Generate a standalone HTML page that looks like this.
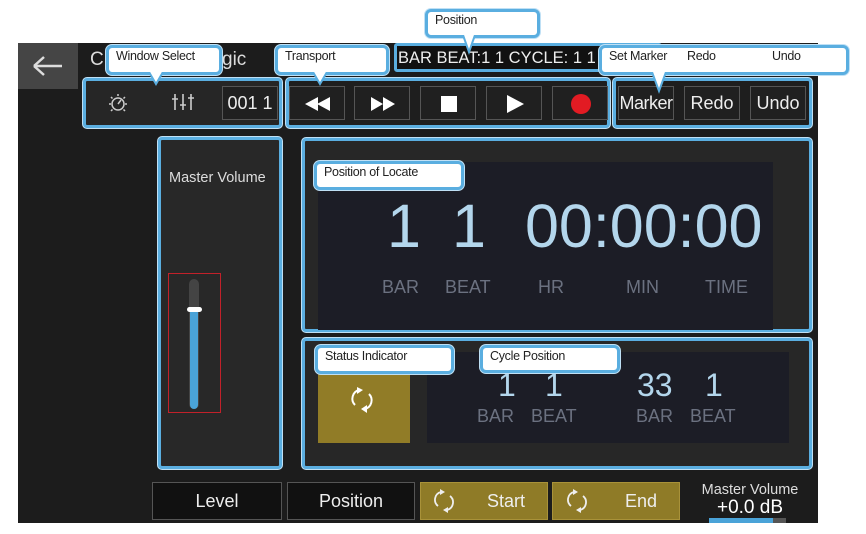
<!DOCTYPE html>
<html><head><meta charset="utf-8"><style>
*{margin:0;padding:0;box-sizing:border-box}
body{width:866px;height:534px;background:#fff;position:relative;overflow:hidden;font-family:"Liberation Sans",sans-serif}
.a{position:absolute}
.scr{left:18px;top:43px;width:800px;height:480px;background:#1c1c1c}
.grp{position:absolute;border:3px solid #5aaee0;border-radius:4px;box-shadow:0 0 0 1px #bfe0f5}
.btn{position:absolute;background:#202020;border:1px solid #555;color:#eee;font-size:18px;text-align:center;line-height:32px}
.co{position:absolute;background:#fff;border:3px solid #5aaee0;border-radius:6px;font-size:12.5px;color:#222;padding:1px 0 0 7px;box-shadow:0 0 0 1px #bfe0f5;letter-spacing:-0.3px}
.big{position:absolute;color:#b3d6ec;font-size:61px;line-height:66px}
.lab{position:absolute;color:#6b7180;font-size:18px}
.mid{position:absolute;color:#b3d6ec;font-size:32px;line-height:30px}
.bb{position:absolute;top:482px;height:38px;border:1px solid #555;background:#111;color:#eee;font-size:18px;line-height:36px;text-align:center}
.gold{background:#8f7b27;border-color:#a99239}
</style></head><body>
<div class="a scr"></div>
<div class="a" style="left:18px;top:43px;width:60px;height:46px;background:#454545"></div>
<svg class="a" style="left:30px;top:54px" width="36" height="24"><path d="M4 12H32M4 12L14 3M4 12L14 21" stroke="#ddd" stroke-width="2.5" fill="none"/></svg>
<div class="a" style="left:90px;top:49px;color:#ddd;font-size:19px">C</div>
<div class="a" style="left:222px;top:49px;color:#ddd;font-size:19px">gic</div>
<div class="a" style="left:394px;top:43px;width:268px;height:29px;border:3px solid #5aaee0;border-radius:3px;background:#111"></div>
<div class="a" style="left:398px;top:49px;color:#eee;font-size:16.5px;white-space:nowrap">BAR BEAT:1 1 CYCLE: 1 1</div>

<div class="grp" style="left:83px;top:78px;width:199px;height:50px;background:#262626"></div>
<div class="grp" style="left:286px;top:78px;width:324px;height:50px;background:#1e1e1e"></div>
<div class="grp" style="left:613px;top:78px;width:199px;height:50px;background:#1e1e1e"></div>
<svg class="a" style="left:106px;top:92px" width="24" height="22"><circle cx="12" cy="12" r="6" stroke="#ccc" stroke-width="1.5" fill="none"/><path d="M12 12L15 8M12 2V4M5 5L6.5 6.5M19 5L17.5 6.5M3 12H5M19 12H21M5 19L6.5 17.5M19 19L17.5 17.5" stroke="#ccc" stroke-width="1.5"/></svg>
<svg class="a" style="left:170px;top:92px" width="26" height="20"><path d="M5 2V18M13 2V18M21 2V18M2 7H8M10 13H16M18 6H24" stroke="#ccc" stroke-width="1.6"/></svg>
<div class="btn" style="left:222px;top:86px;width:56px;height:34px">001 1</div>
<div class="btn" style="left:289px;top:86px;width:56px;height:34px"><svg class="a" style="left:15px;top:9px" width="26" height="16"><path d="M0 8L13 1V15ZM12 8L25 1V15Z" fill="#fff"/></svg></div>
<div class="btn" style="left:354px;top:86px;width:56px;height:34px"><svg class="a" style="left:15px;top:9px" width="26" height="16"><path d="M1 1L13 8L1 15ZM13 1L25 8L13 15Z" fill="#fff"/></svg></div>
<div class="btn" style="left:420px;top:86px;width:56px;height:34px"><div class="a" style="left:20px;top:9px;width:16px;height:16px;background:#fff"></div></div>
<div class="btn" style="left:486px;top:86px;width:56px;height:34px"><svg class="a" style="left:18px;top:7px" width="20" height="20"><path d="M2 1L19 10L2 19Z" fill="#fff"/></svg></div>
<div class="btn" style="left:552px;top:86px;width:56px;height:34px"><div class="a" style="left:18px;top:7px;width:20px;height:20px;border-radius:50%;background:#e21b23"></div></div>
<div class="btn" style="left:618px;top:86px;width:56px;height:34px;letter-spacing:-0.5px">Marker</div>
<div class="btn" style="left:684px;top:86px;width:56px;height:34px">Redo</div>
<div class="btn" style="left:750px;top:86px;width:56px;height:34px">Undo</div>

<div class="grp" style="left:158px;top:137px;width:124px;height:332px;background:#282828"></div>
<div class="a" style="left:169px;top:170px;color:#ddd;font-size:14.5px">Master Volume</div>
<div class="a" style="left:168px;top:273px;width:53px;height:140px;border:1.5px solid #c2212a"></div>
<div class="a" style="left:189px;top:279px;width:10px;height:130px;background:#444;border-radius:5px"></div>
<div class="a" style="left:190px;top:310px;width:8px;height:99px;background:#4aa3d8;border-radius:0 0 4px 4px"></div>
<div class="a" style="left:187px;top:307px;width:15px;height:5px;background:#fff;border-radius:3px"></div>

<div class="grp" style="left:302px;top:138px;width:510px;height:194px;background:#272727"></div>
<div class="a" style="left:318px;top:162px;width:455px;height:168px;background:#1c1d26"></div>
<div class="big" style="left:387px;top:193px">1</div>
<div class="big" style="left:452px;top:193px">1</div>
<div class="big" style="left:525px;top:193px">00:00:00</div>
<div class="lab" style="left:382px;top:277px">BAR</div>
<div class="lab" style="left:445px;top:277px">BEAT</div>
<div class="lab" style="left:538px;top:277px">HR</div>
<div class="lab" style="left:626px;top:277px">MIN</div>
<div class="lab" style="left:705px;top:277px">TIME</div>

<div class="grp" style="left:302px;top:338px;width:510px;height:131px;background:#272727"></div>
<div class="a" style="left:318px;top:360px;width:92px;height:83px;background:#917c27"></div>
<svg class="a" style="left:347px;top:386px" width="30" height="28"><path d="M12 4A9 9 0 0 0 8 19M18 23A9 9 0 0 0 22 8" stroke="#fff" stroke-width="2" fill="none"/><path d="M10 1L16 4L10 8Z M20 19L14 23L20 27Z" fill="#fff"/></svg>
<div class="a" style="left:427px;top:352px;width:362px;height:91px;background:#1c1d26"></div>
<div class="mid" style="left:498px;top:370px">1</div>
<div class="mid" style="left:545px;top:370px">1</div>
<div class="mid" style="left:637px;top:370px">33</div>
<div class="mid" style="left:705px;top:370px">1</div>
<div class="lab" style="left:477px;top:406px">BAR</div>
<div class="lab" style="left:531px;top:406px">BEAT</div>
<div class="lab" style="left:636px;top:406px">BAR</div>
<div class="lab" style="left:690px;top:406px">BEAT</div>

<div class="bb" style="left:152px;width:130px">Level</div>
<div class="bb" style="left:287px;width:128px">Position</div>
<div class="bb gold" style="left:420px;width:128px;padding-left:44px">Start</div>
<div class="bb gold" style="left:552px;width:128px;padding-left:50px">End</div>
<svg class="a" style="left:431px;top:489px" width="26" height="24"><path d="M10 3A8 8 0 0 0 7 17M16 21A8 8 0 0 0 19 7" stroke="#eee" stroke-width="1.8" fill="none"/><path d="M9 0L14 3L9 6Z M17 18L12 21L17 24Z" fill="#eee"/></svg>
<svg class="a" style="left:564px;top:489px" width="26" height="24"><path d="M10 3A8 8 0 0 0 7 17M16 21A8 8 0 0 0 19 7" stroke="#eee" stroke-width="1.8" fill="none"/><path d="M9 0L14 3L9 6Z M17 18L12 21L17 24Z" fill="#eee"/></svg>
<div class="a" style="left:690px;top:482px;width:120px;text-align:center;color:#ddd;font-size:14.5px">Master Volume</div>
<div class="a" style="left:690px;top:497px;width:120px;text-align:center;color:#fff;font-size:19px">+0.0 dB</div>
<div class="a" style="left:709px;top:518px;width:64px;height:5px;background:#4aa3d8"></div>
<div class="a" style="left:773px;top:518px;width:13px;height:5px;background:#555"></div>

<div class="co" style="left:425px;top:9px;width:115px;height:29px">Position</div>
<div class="co" style="left:106px;top:45px;width:116px;height:30px">Window Select</div>
<div class="co" style="left:275px;top:45px;width:114px;height:30px">Transport</div>
<div class="co" style="left:599px;top:45px;width:250px;height:30px"><span>Set Marker</span><span style="position:absolute;left:85px">Redo</span><span style="position:absolute;left:170px">Undo</span></div>
<div class="co" style="left:314px;top:161px;width:150px;height:29px">Position of Locate</div>
<div class="co" style="left:315px;top:345px;width:139px;height:29px">Status Indicator</div>
<div class="co" style="left:480px;top:345px;width:140px;height:28px">Cycle Position</div>
<svg class="a" style="left:148px;top:72px" width="16" height="14"><path d="M1 0L8 12L15 0" fill="#fff" stroke="#5aaee0" stroke-width="2"/></svg>
<svg class="a" style="left:312px;top:72px" width="16" height="14"><path d="M1 0L8 12L15 0" fill="#fff" stroke="#5aaee0" stroke-width="2"/></svg>
<svg class="a" style="left:462px;top:35px" width="14" height="20"><path d="M1 0L7 17L13 0" fill="#fff" stroke="#5aaee0" stroke-width="2"/></svg>
<svg class="a" style="left:651px;top:72px" width="16" height="22"><path d="M1 0L8 19L15 0" fill="#fff" stroke="#5aaee0" stroke-width="2"/></svg>
</body></html>
